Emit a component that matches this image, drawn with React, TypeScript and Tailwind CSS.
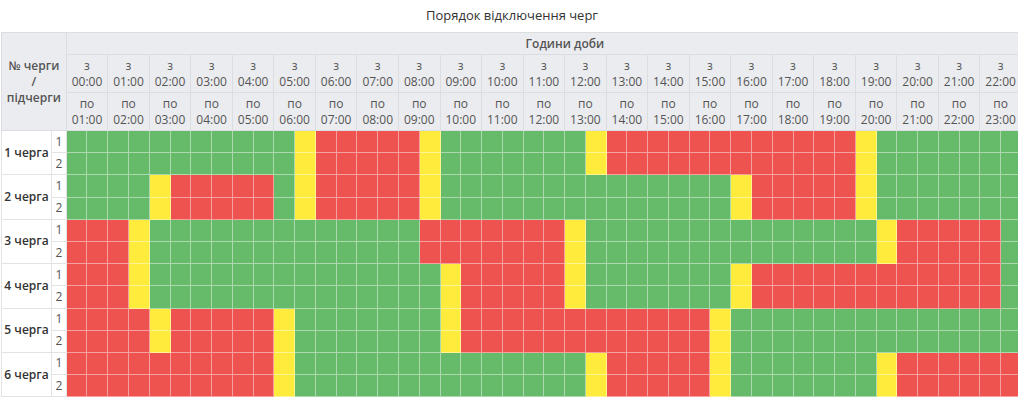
import React from 'react';

const CELL: Record<string, string> = {
    g: 'bg-[#66bb6a]',
    y: 'bg-[#ffeb3b]',
    r: 'bg-[#ef5350]',
};

// runs like "g11 y1 r5" -> 48 half-hour slots
function expand(spec: string) {
    return spec
        .split(' ')
        .map((s) => s[0].repeat(Number(s.slice(1))))
        .join('');
}

const queues = [
    expand('g11 y1 r5 y1 g7 y1 r12 y1 g9'),
    expand('g4 y1 r5 g1 y1 r5 y1 g14 y1 r5 y1 g9'),
    expand('r3 y1 g13 r7 y1 g14 y1 r5 g3'),
    expand('r3 y1 g14 y1 r5 y1 g7 y1 r12 g3'),
    expand('r4 y1 r5 y1 g7 y1 r12 y1 g16'),
    expand('r10 y1 g14 y1 r5 y1 g7 y1 r8'),
];

const pad = (n: number) => String(n).padStart(2, '0') + ':00';
const hours = Array.from({ length: 24 }, (_, i) => i);

const head = 'bg-[#ebecef] border-r border-b border-[#dcdde0] text-center align-middle text-[12px] leading-4 text-[#555]';

export default function App() {
    return (
        <div className="min-h-screen bg-white font-['Open_Sans',sans-serif]">
            <div className="h-8 flex items-center justify-center text-[13px] text-[#333]">
                Порядок відключення черг
            </div>
            <div className="w-[1018px] overflow-hidden pl-px">
                <table className="table-fixed border-separate border-spacing-0 w-[1063.1px]">
                    <colgroup>
                        <col className="w-[51px]" />
                        <col className="w-[14.7px]" />
                        {Array.from({ length: 48 }, (_, i) => (
                            <col key={i} className="w-[20.78px]" />
                        ))}
                    </colgroup>
                    <thead>
                        <tr>
                            <th
                                rowSpan={3}
                                colSpan={2}
                                className={`${head} border-l border-t font-semibold text-[#444]`}
                            >
                                № черги
                                <br />/<br />
                                підчерги
                            </th>
                            <th colSpan={48} className={`${head} border-t h-[23px] font-semibold text-[#444]`}>
                                Години доби
                            </th>
                        </tr>
                        <tr>
                            {hours.map((h) => (
                                <th key={h} colSpan={2} className={`${head} h-[38px] font-medium`}>
                                    з<br />
                                    {pad(h)}
                                </th>
                            ))}
                        </tr>
                        <tr>
                            {hours.map((h) => (
                                <th key={h} colSpan={2} className={`${head} h-[38px] font-medium`}>
                                    по<br />
                                    {pad(h + 1)}
                                </th>
                            ))}
                        </tr>
                    </thead>
                    <tbody>
                        {queues.map((slots, q) =>
                            [1, 2].map((sub) => (
                                <tr key={`${q}-${sub}`}>
                                    {sub === 1 && (
                                        <td
                                            rowSpan={2}
                                            className="bg-white border-l border-r border-b border-[#e3e3e3] text-center text-[12px] font-semibold text-[#333] whitespace-nowrap"
                                        >
                                            {q + 1} черга
                                        </td>
                                    )}
                                    <td className="h-[22.2px] bg-white border-r border-b border-[#e3e3e3] text-center text-[12px] text-[#555]">
                                        {sub}
                                    </td>
                                    {slots.split('').map((c, i) => (
                                        <td key={i} className={`${CELL[c]} border-r border-b border-white/45`} />
                                    ))}
                                </tr>
                            ))
                        )}
                    </tbody>
                </table>
            </div>
        </div>
    );
}
